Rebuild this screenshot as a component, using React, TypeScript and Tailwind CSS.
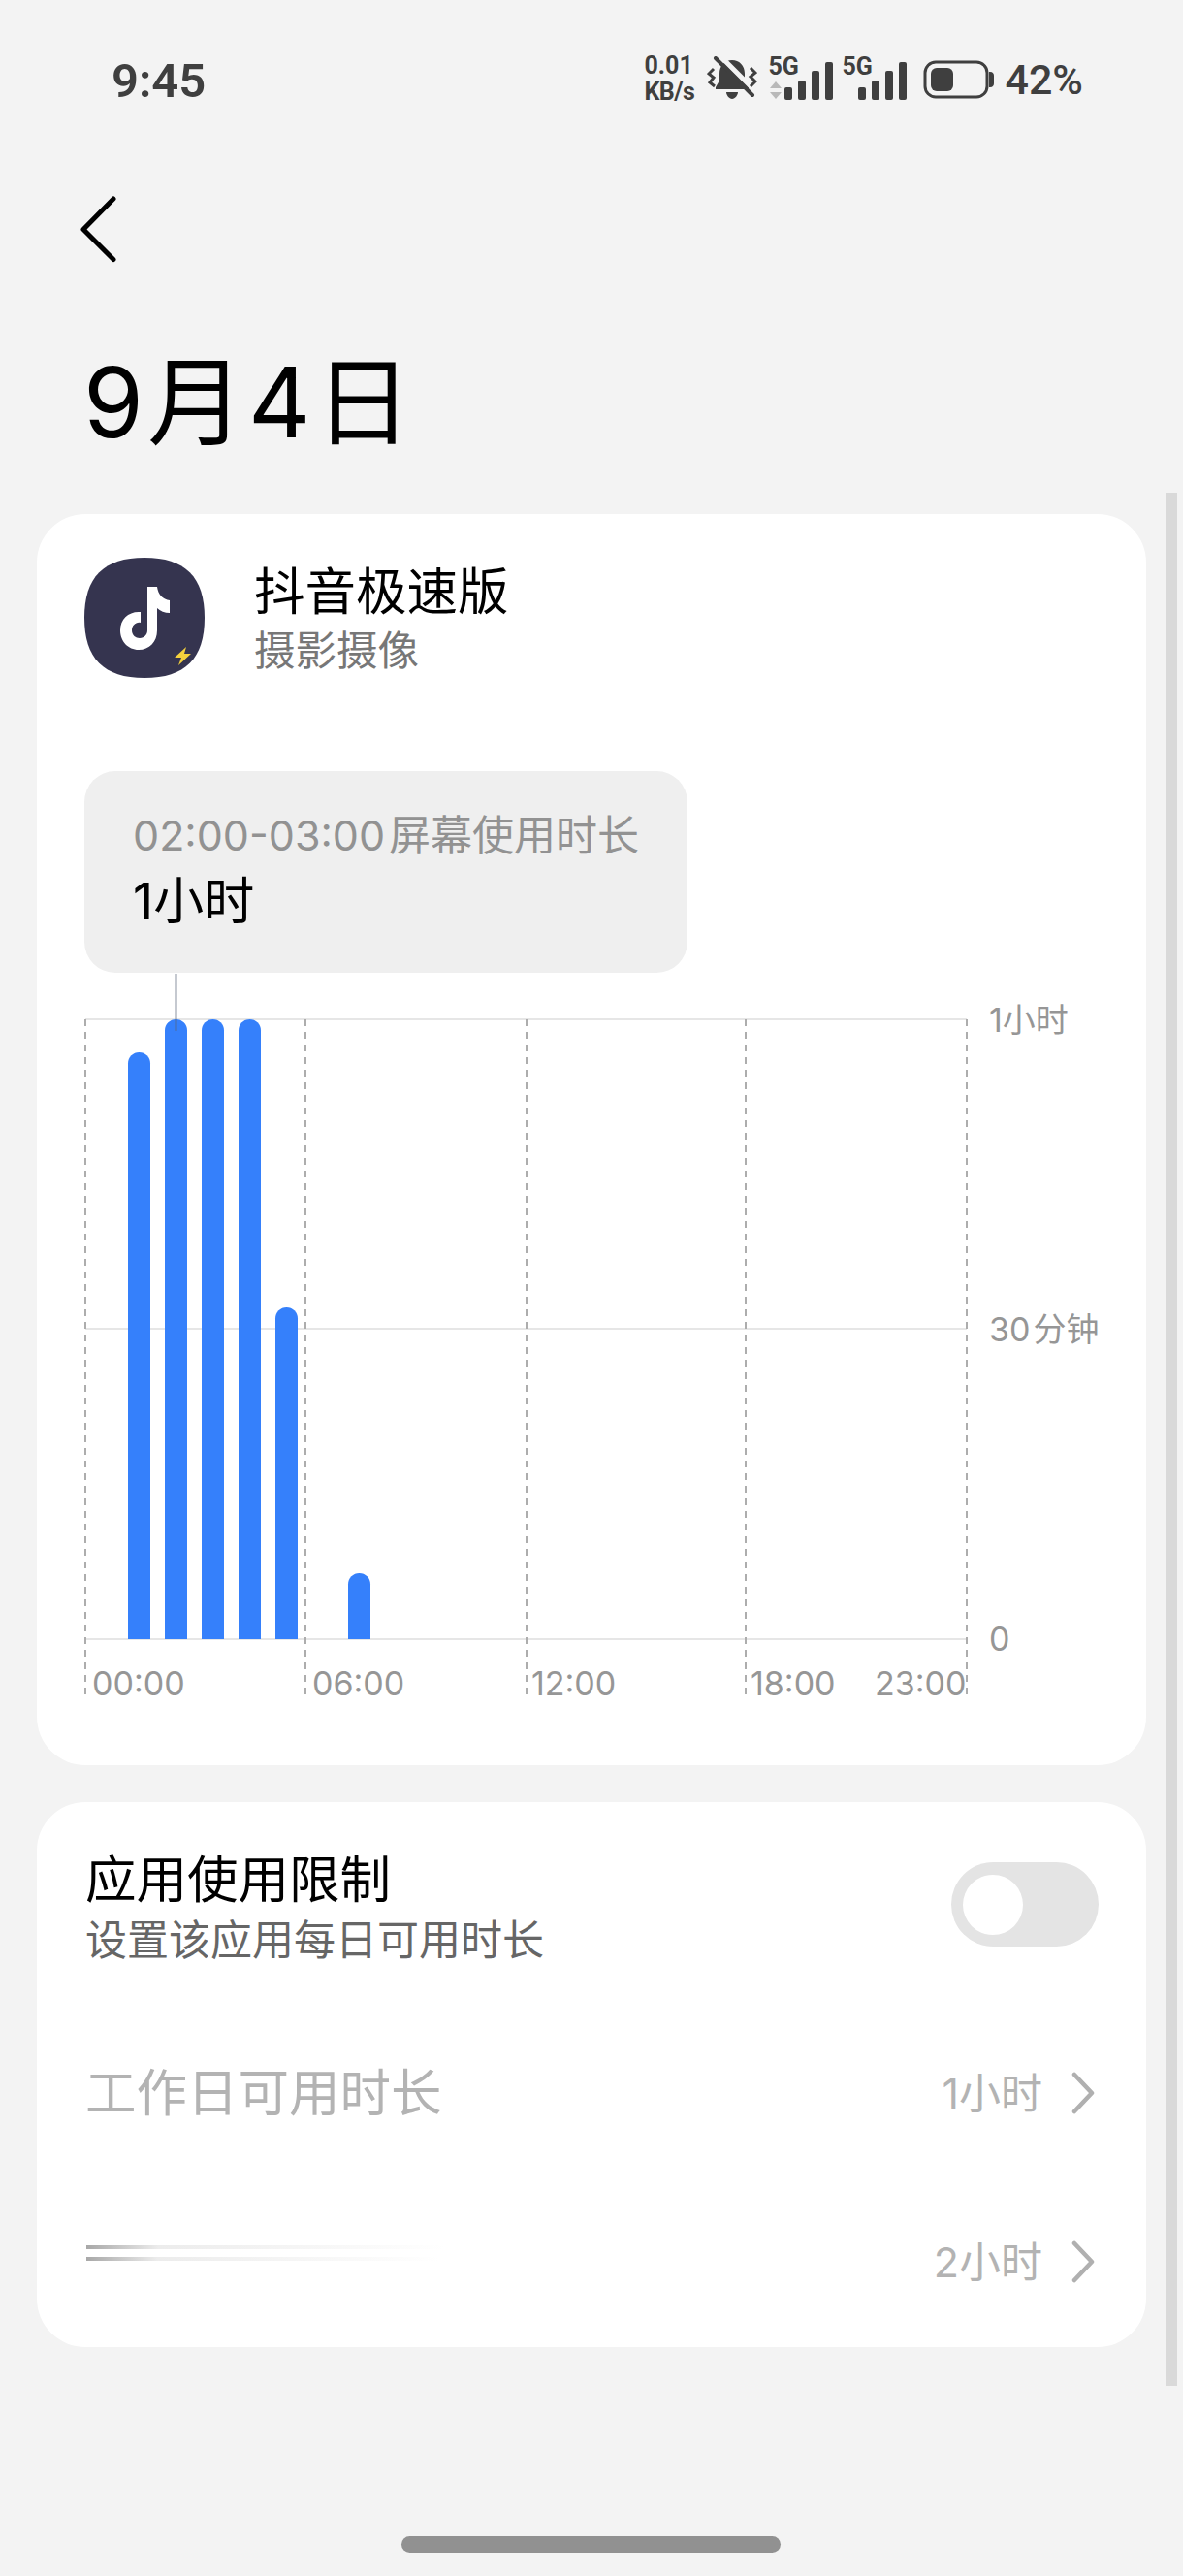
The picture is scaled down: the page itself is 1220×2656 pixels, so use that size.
const BASE = "font-['Inter','Noto_Sans_CJK_SC',sans-serif]";
const INK = "#3f3f3f";

function SignalBars() {
  return (
    <svg width="50" height="40" viewBox="0 0 50 40" className="block">
      <rect x="0" y="26" width="8" height="13" rx="2" fill={INK} />
      <rect x="14" y="19" width="8" height="20" rx="2" fill={INK} />
      <rect x="28" y="9" width="8" height="30" rx="2" fill={INK} />
      <rect x="42" y="0" width="8" height="39" rx="2" fill={INK} />
    </svg>
  );
}

function Bell() {
  return (
    <svg width="52" height="46" viewBox="0 0 52 46" className="block">
      <path d="M26 4c8 0 13 6 13 14v7l4 7v2H9v-2l4-7v-7C13 10 18 4 26 4z" fill={INK} />
      <path d="M20 37h12c0 3-3 7-6 7s-6-4-6-7z" fill={INK} />
      <path d="M12 -2l39 39" stroke="#f3f3f3" strokeWidth="5" />
      <path d="M9 2l38 38" stroke={INK} strokeWidth="4" strokeLinecap="round" />
      <path d="M7 13L2 18l5 4-4 5 5 4" fill="none" stroke={INK} strokeWidth="3" />
      <path d="M45 12l5 5-5 4 5 5-5 5" fill="none" stroke={INK} strokeWidth="3" />
    </svg>
  );
}

function StatusBar() {
  return (
    <div className="flex h-[164px] items-start justify-between pl-[115px] pr-[103px] text-[#3f3f3f]">
      <span className="mt-[57px] text-[49px] leading-[54px] font-semibold font-['Roboto',sans-serif]">9:45</span>
      <div className="mt-[54px] h-[54px] flex items-center">
        <div className="w-[51px] flex flex-col items-start text-[25px] leading-[27px] font-bold font-['Roboto',sans-serif] whitespace-nowrap">
          <span>0.01</span>
          <span className="tracking-[-0.5px]">KB/s</span>
        </div>
        <div className="ml-[14px]"><Bell /></div>
        <div className="relative flex items-end gap-[3px] h-[46px] w-[67px] ml-[11px] pl-[2px]">
          <div className="absolute left-0 top-[-2px] text-[25px] leading-[26px] font-bold font-['Roboto',sans-serif]">5G</div>
          <svg width="12" height="18" viewBox="0 0 12 18" className="block mb-[2px]">
            <path d="M6 0l6 7H0z" fill="#b9b9b9" />
            <path d="M6 18l6-7H0z" fill="#b9b9b9" />
          </svg>
          <SignalBars />
        </div>
        <div className="relative flex items-end justify-end h-[46px] w-[67px] ml-[9px]">
          <div className="absolute left-0 top-[-2px] text-[25px] leading-[26px] font-bold font-['Roboto',sans-serif]">5G</div>
          <SignalBars />
        </div>
        <svg width="74" height="40" viewBox="0 0 74 40" className="block ml-[17px] mt-[2px]">
          <rect x="2" y="2" width="64" height="36" rx="11" fill="none" stroke={INK} strokeWidth="3" />
          <rect x="8" y="8" width="23" height="24" rx="6" fill={INK} />
          <path d="M68 12h1c3 0 4 2 4 4v8c0 2-1 4-4 4h-1z" fill={INK} />
        </svg>
        <span className="ml-[10px] mt-[2px] text-[43px] leading-[46px] font-medium font-['Roboto',sans-serif]">42%</span>
      </div>
    </div>
  );
}

function Chart() {
  const verticals = [88, 315, 543, 769, 997];
  const bars = [
    [132, 1084],
    [170, 1050],
    [208, 1050],
    [246, 1050],
    [284, 1347],
    [359, 1621],
  ];
  const ox = 38;
  const oy = 1003;
  const xt = "fill-[#969696] text-[34px] font-['Inter','Noto_Sans_CJK_SC',sans-serif]";
  const yt = "fill-[#969696] text-[34px] font-['Inter','Noto_Sans_CJK_SC',sans-serif]";
  return (
    <svg width="1144" height="760" viewBox={`${ox} ${oy} 1144 760`} className="block">
      {[1050, 1369, 1689].map((y) => (
        <line key={y} x1="88" x2="997" y1={y} y2={y} stroke="#e6e6e6" strokeWidth="2" />
      ))}
      {verticals.map((x) => (
        <line key={x} x1={x} x2={x} y1="1050" y2="1752" stroke="#adadad" strokeWidth="2" strokeDasharray="7 6" />
      ))}
      {bars.map(([x, y]) => (
        <path key={x} d={`M${x} 1689V${y + 11.5}a11.5 11.5 0 0 1 23 0V1689z`} fill="#3580fb" />
      ))}
      <line x1="181.5" x2="181.5" y1="1003" y2="1062" stroke="#5a6478" strokeOpacity="0.35" strokeWidth="3" />
      <text x="95" y="1747" className={xt}>00:00</text>
      <text x="322" y="1747" className={xt}>06:00</text>
      <text x="548" y="1747" className={xt}>12:00</text>
      <text x="774" y="1747" className={xt}>18:00</text>
      <text x="902" y="1747" className={xt}>23:00</text>
      <text x="1020" y="1063" className={yt}>1小时</text>
      <text x="1020" y="1382" className={yt}>30<tspan dx="3">分钟</tspan></text>
      <text x="1020" y="1701" className={yt}>0</text>
    </svg>
  );
}

function AppIcon() {
  return (
    <svg width="124" height="124" viewBox="0 0 124 124" className="block shrink-0">
      <path d="M62 0C104 0 124 20 124 62S104 124 62 124 0 104 0 62 20 0 62 0z" fill="#35344f" />
      <path d="M65 30H75C76 38 81 43 88 44V57C83 57 78 55 75 52V75C75 87 67 95 56 95 45 95 37 86 37 75 37 63 46 55 58 56V67C53 66 49 70 49 75 49 80 53 83 57 83 62 83 65 79 65 75z" fill="#ffffff" />
      <path d="M105 92L93 103h7l-3 8 13-12h-7l2-7z" fill="#f4d13d" />
    </svg>
  );
}

function Chevron() {
  return (
    <svg width="24" height="44" viewBox="0 0 24 44" className="block mr-[4px]">
      <path d="M3 3l18 19L3 41" fill="none" stroke="#b0b0b0" strokeWidth="4.5" strokeLinecap="round" strokeLinejoin="round" />
    </svg>
  );
}

export default function App() {
  return (
    <div className={`relative w-[1220px] h-[2656px] bg-[#f3f3f3] overflow-hidden ${BASE}`}>
      <StatusBar />
      <div className="h-[366px] pl-[82px] pt-[36px]">
        <svg width="38" height="72" viewBox="0 0 38 72" className="block">
          <path d="M35 5L4 36.500l31 31" fill="none" stroke="#000" strokeWidth="5" strokeLinecap="round" strokeLinejoin="round" />
        </svg>
        <h1 className="mt-[87px] pl-[4px] text-[100px] leading-[112px] font-normal text-black tracking-[4px] whitespace-nowrap">9月4日</h1>
      </div>

      <div className="ml-[38px] w-[1144px] h-[1290px] bg-white rounded-[50px]">
        <div className="flex items-center pl-[49px] pt-[45px] gap-[51px]">
          <AppIcon />
          <div className="flex flex-col">
            <span className="text-[52.500px] leading-[62px] text-black">抖音极速版</span>
            <span className="text-[42.500px] leading-[50px] text-[#777777] mt-[5px]">摄影摄像</span>
          </div>
        </div>
        <div className="ml-[49px] mt-[96px] w-[622px] h-[208px] rounded-[32px] bg-[#efefef] pl-[50px] pt-[36px]">
          <div className="text-[#929292] leading-[60px] whitespace-nowrap">
            <span className="text-[43px]">02:00-03:00</span>
            <span className="text-[43px] ml-[4px]">屏幕使用时长</span>
          </div>
          <div className="text-[52px] leading-[60px] text-black -mt-[1px]">1小时</div>
        </div>
        <div className="mt-[1px]"><Chart /></div>
      </div>

      <div className="ml-[38px] mt-[38px] w-[1144px] h-[562px] bg-white rounded-[50px] pl-[50px] pr-[49px]">
        <div className="flex items-center justify-between pt-[48px]">
          <div className="flex flex-col">
            <span className="text-[52.500px] leading-[62px] text-black mt-[1px]">应用使用限制</span>
            <span className="text-[43px] leading-[52px] text-[#666666] mt-[5px]">设置该应用每日可用时长</span>
          </div>
          <div className="flex items-center w-[152px] h-[87px] rounded-full bg-[#e4e4e4] pl-[12px] -mt-[5px]">
            <div className="w-[62px] h-[62px] rounded-full bg-white" />
          </div>
        </div>
        <div className="flex items-center justify-between mt-[102px] h-[60px]">
          <span className="text-[52.500px] leading-[60px] text-[#b3b3b3]">工作日可用时长</span>
          <div className="flex items-center gap-[30px] text-[43px] text-[#b3b3b3]">
            <span>1小时</span>
            <Chevron />
          </div>
        </div>
        <div className="flex items-center justify-between mt-[114px] h-[60px]">
          <div className="flex flex-col gap-[8px] ml-[1px] -mt-[18px]">
            <div className="w-[370px] h-[4px] bg-linear-to-r from-[#a8a8a8] via-[#ececec] via-20% to-white" />
            <div className="w-[365px] h-[4px] bg-linear-to-r from-[#a8a8a8] via-[#ececec] via-20% to-white" />
          </div>
          <div className="flex items-center gap-[30px] text-[43px] text-[#b3b3b3]">
            <span>2小时</span>
            <Chevron />
          </div>
        </div>
      </div>

      <div className="absolute left-[1202px] top-[508px] w-[12px] h-[1952px] bg-[#d9d9d9]" />
      <div className="absolute left-[414px] top-[2615px] w-[391px] h-[17px] rounded-full bg-[#919191]" />
    </div>
  );
}
